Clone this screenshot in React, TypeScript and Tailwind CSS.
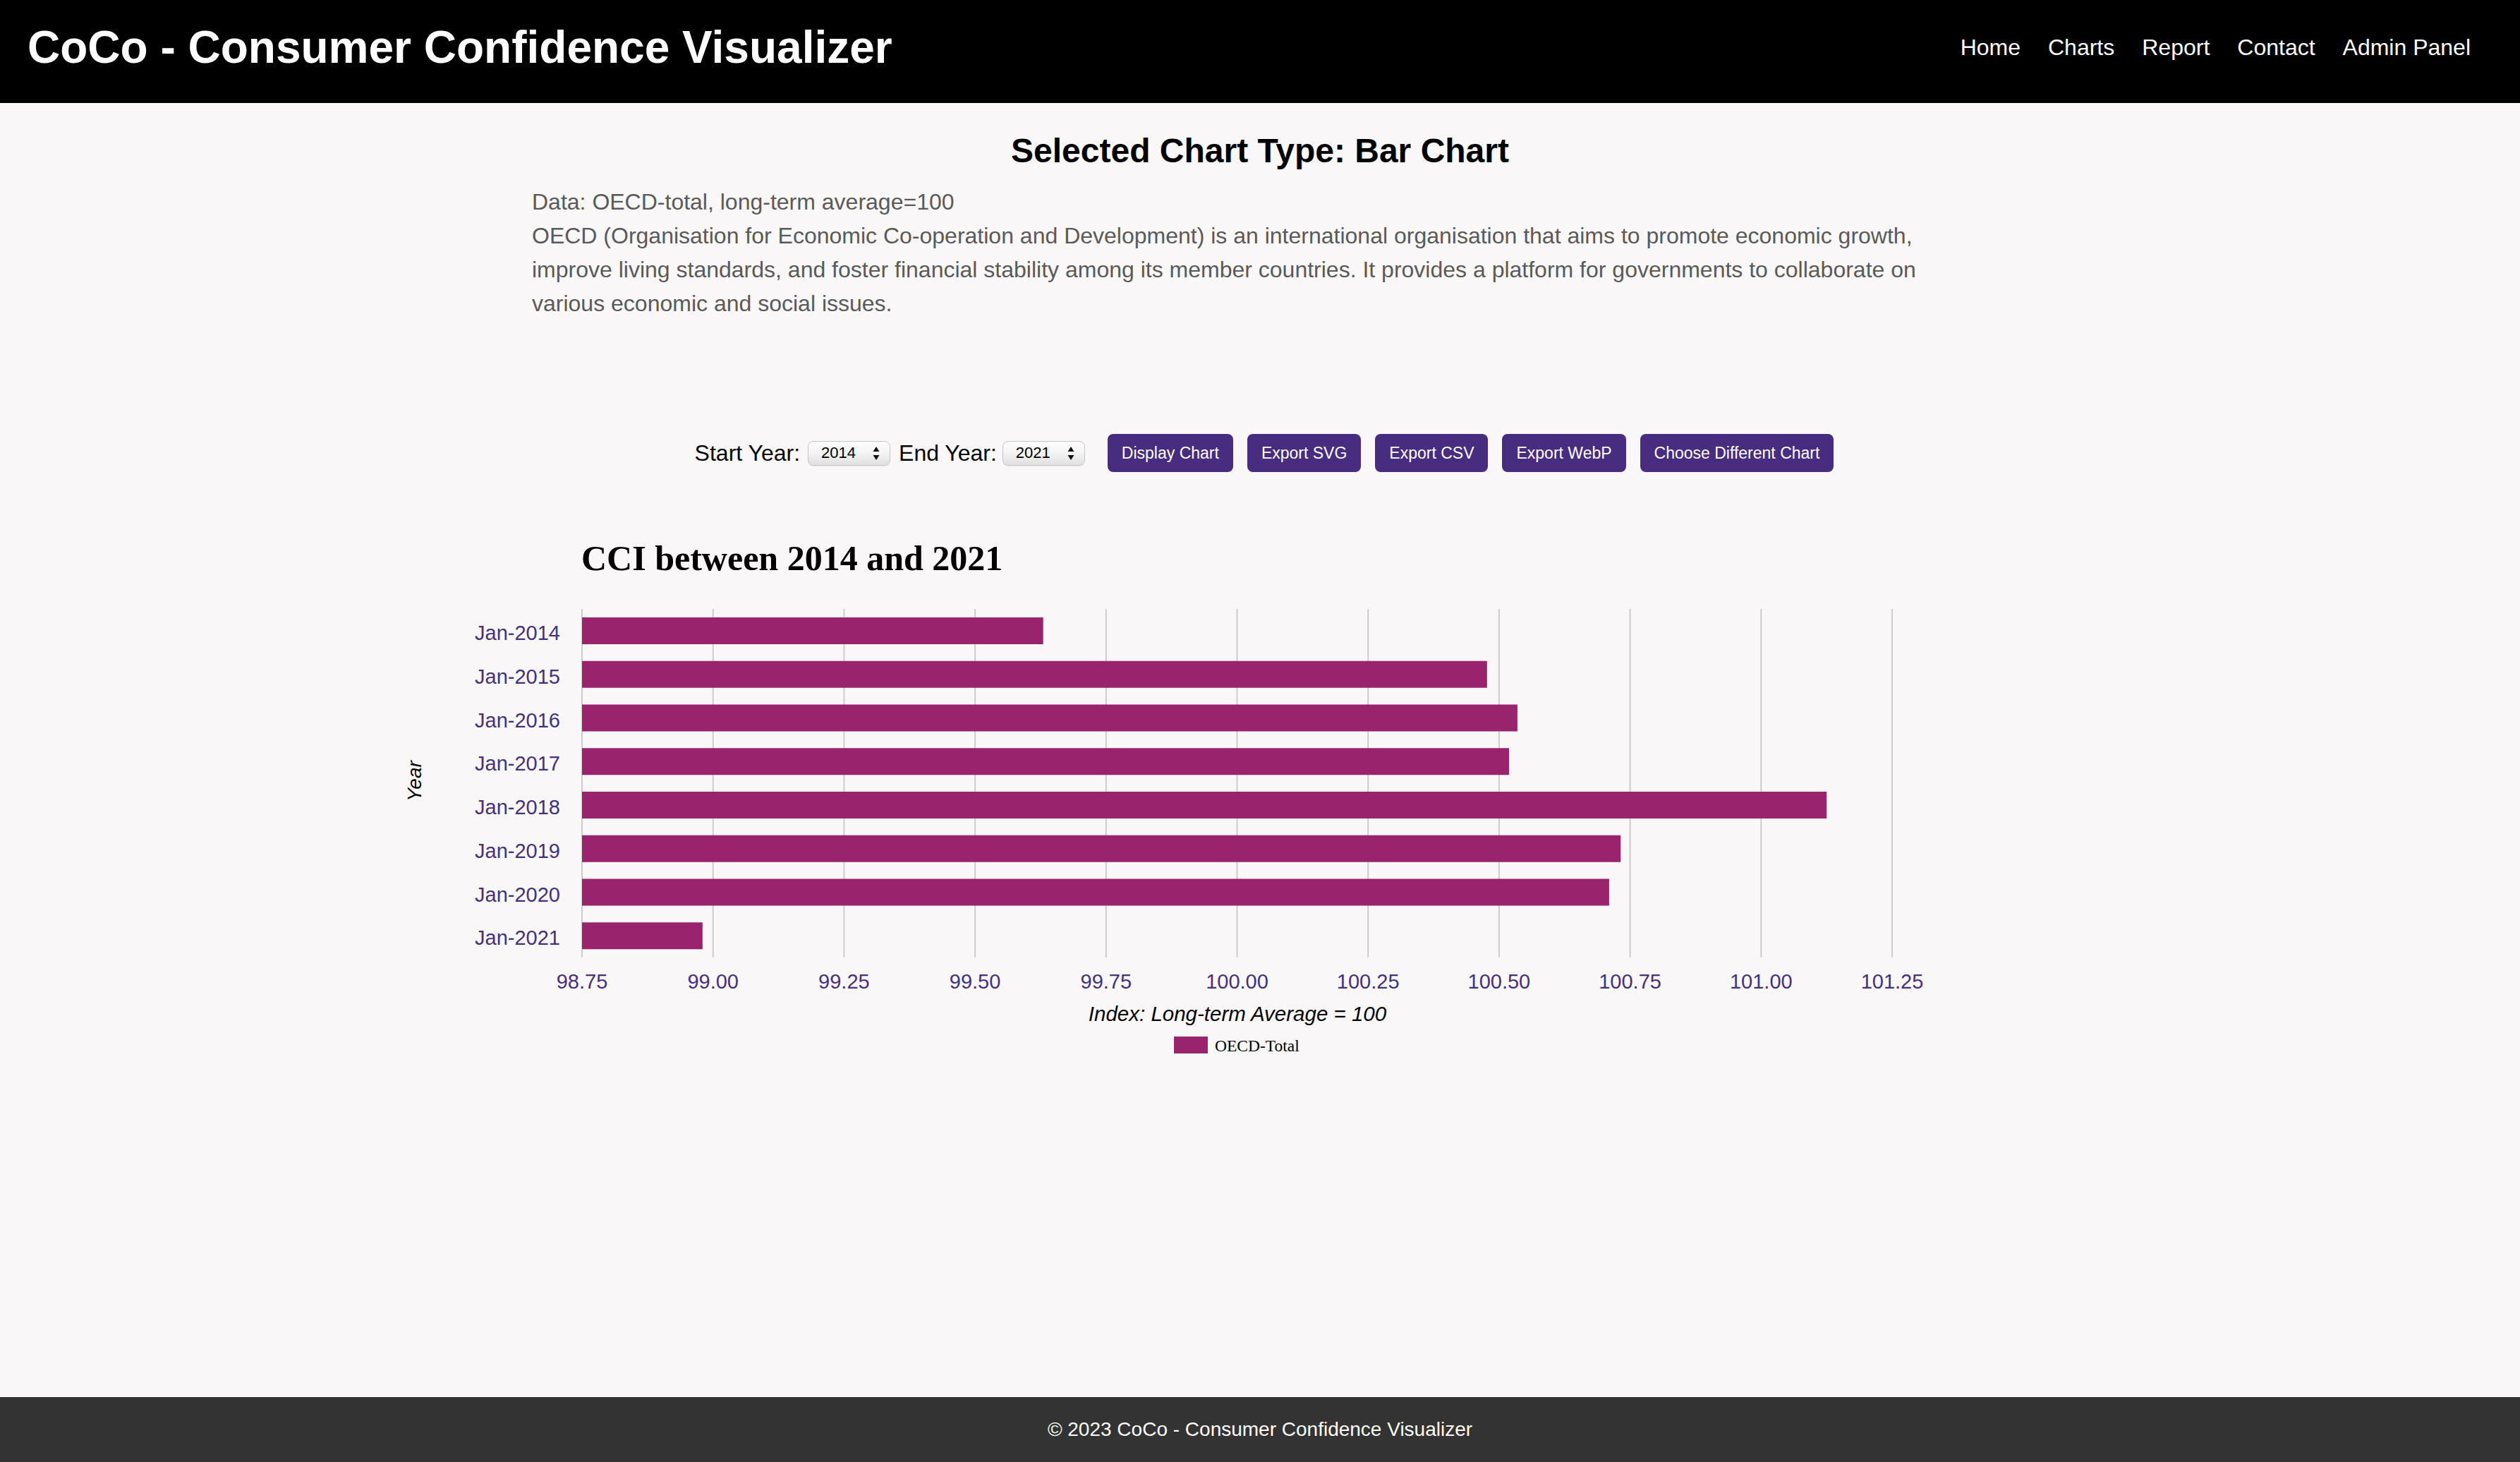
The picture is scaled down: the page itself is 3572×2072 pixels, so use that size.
import React from "react";

const NAV = ["Home", "Charts", "Report", "Contact", "Admin Panel"];

// CCI values read from the chart, one per January
const DATA = [
  { label: "Jan-2014", value: 99.63 },
  { label: "Jan-2015", value: 100.477 },
  { label: "Jan-2016", value: 100.535 },
  { label: "Jan-2017", value: 100.519 },
  { label: "Jan-2018", value: 101.125 },
  { label: "Jan-2019", value: 100.732 },
  { label: "Jan-2020", value: 100.71 },
  { label: "Jan-2021", value: 98.98 },
];

const TICKS = [98.75, 99, 99.25, 99.5, 99.75, 100, 100.25, 100.5, 100.75, 101, 101.25];

const X0 = 289;
const X_MIN = 98.75;
const PX_PER_UNIT = 742.8;
const PLOT_TOP = 142;
const PLOT_BOTTOM = 636;
const STEP = 61.75;
const BAR_H = 38;
const BAR_COLOR = "#9a236e";
const LABEL_COLOR = "#46307f";

const sx = (v: number) => X0 + (v - X_MIN) * PX_PER_UNIT;

function YearSelect({ value, className }: { value: string; className: string }) {
  return (
    <div
      role="combobox"
      className={`flex h-[35px] w-[117px] items-center justify-between rounded-[8px] border border-[#c6c6c6] bg-gradient-to-b from-white via-[#f3f3f3] to-[#e0e0e0] pl-[18px] pr-[14px] shadow-[inset_0_1px_0_#ffffff,0_1px_1px_rgba(0,0,0,0.08)] ${className}`}
    >
      <span className="text-[22px] leading-none text-black">{value}</span>
      <svg width="10" height="19" viewBox="0 0 10 19">
        <path d="M5 0 L9.5 7 L0.5 7 Z" fill="#111" />
        <path d="M0.5 12 L9.5 12 L5 19 Z" fill="#111" />
      </svg>
    </div>
  );
}

function Button({ children }: { children: React.ReactNode }) {
  return (
    <button className="h-[54px] rounded-[8px] bg-[#472c80] px-[20px] text-[23px] text-white">
      {children}
    </button>
  );
}

function BarChart() {
  return (
    <svg width="2500" height="800" viewBox="0 0 2500 800" className="block">
      <text
        x="288"
        y="87"
        fontFamily="'Liberation Serif', 'Times New Roman', serif"
        fontWeight="bold"
        fontSize="50"
        fill="#000"
      >
        CCI between 2014 and 2021
      </text>

      {/* grid */}
      {TICKS.map((t) => (
        <line
          key={t}
          x1={sx(t)}
          x2={sx(t)}
          y1={PLOT_TOP}
          y2={PLOT_BOTTOM}
          stroke="#cccccc"
          strokeWidth="2"
        />
      ))}

      {/* bars + y labels */}
      {DATA.map((d, i) => {
        const top = PLOT_TOP + 12 + i * STEP;
        return (
          <g key={d.label}>
            <rect x={X0} y={top} width={sx(d.value) - X0} height={BAR_H} fill={BAR_COLOR} />
            <text
              x="258"
              y={top + BAR_H / 2 + 13}
              textAnchor="end"
              fontFamily="'Liberation Sans', Arial, sans-serif"
              fontSize="29"
              fill={LABEL_COLOR}
            >
              {d.label}
            </text>
          </g>
        );
      })}

      {/* x labels */}
      {TICKS.map((t) => (
        <text
          key={t}
          x={sx(t)}
          y="680"
          textAnchor="middle"
          fontFamily="'Liberation Sans', Arial, sans-serif"
          fontSize="29"
          fill={LABEL_COLOR}
        >
          {t.toFixed(2)}
        </text>
      ))}

      <text
        x="-386"
        y="61"
        transform="rotate(-90)"
        textAnchor="middle"
        fontFamily="'Liberation Sans', Arial, sans-serif"
        fontStyle="italic"
        fontSize="28"
        fill="#000"
      >
        Year
      </text>

      <text
        x="1218"
        y="726"
        textAnchor="middle"
        fontFamily="'Liberation Sans', Arial, sans-serif"
        fontStyle="italic"
        fontSize="29.5"
        fill="#000"
      >
        Index: Long-term Average = 100
      </text>

      {/* legend */}
      <rect x="1128" y="748" width="48" height="24" fill={BAR_COLOR} />
      <text
        x="1186"
        y="769"
        fontFamily="'Liberation Serif', 'Times New Roman', serif"
        fontSize="23.5"
        fill="#000"
      >
        OECD-Total
      </text>
    </svg>
  );
}

export default function App() {
  return (
    <div className="flex min-h-screen flex-col bg-[#faf7f8] font-['Liberation_Sans',Arial,sans-serif]">
      <header className="flex h-[146px] shrink-0 items-center justify-between bg-black pb-[12px] pl-[39px] pr-[70px]">
        <h1 className="text-[64px] font-bold leading-none text-white">
          CoCo - Consumer Confidence Visualizer
        </h1>
        <nav className="flex gap-[39px]">
          {NAV.map((n) => (
            <a key={n} href="#" className="text-[32px] leading-none text-white">
              {n}
            </a>
          ))}
        </nav>
      </header>

      <main className="flex flex-1 flex-col items-center pt-[40px]">
        <h2 className="text-[48px] font-bold leading-[56px] text-black">
          Selected Chart Type: Bar Chart
        </h2>

        <div className="mt-[20px] w-[2064px] text-[32px] leading-[48px] text-[#5a5a5a]">
          <p>Data: OECD-total, long-term average=100</p>
          <p>
            OECD (Organisation for Economic Co-operation and Development) is an international
            organisation that aims to promote economic growth, improve living standards, and foster
            financial stability among its member countries. It provides a platform for governments
            to collaborate on various economic and social issues.
          </p>
        </div>

        <div className="mt-[161px] flex items-center pl-[12px] text-[32px] text-black">
          <span>Start Year:</span>
          <YearSelect value="2014" className="ml-[11px] mr-[12px]" />
          <span>End Year:</span>
          <YearSelect value="2021" className="ml-[8px] mr-[32px]" />
          <div className="flex gap-[20px]">
            <Button>Display Chart</Button>
            <Button>Export SVG</Button>
            <Button>Export CSV</Button>
            <Button>Export WebP</Button>
            <Button>Choose Different Chart</Button>
          </div>
        </div>

        <div className="mt-[52px]">
          <BarChart />
        </div>
      </main>

      <footer className="flex h-[92px] shrink-0 items-center justify-center bg-[#333333] text-[28px] text-white">
        © 2023 CoCo - Consumer Confidence Visualizer
      </footer>
    </div>
  );
}
